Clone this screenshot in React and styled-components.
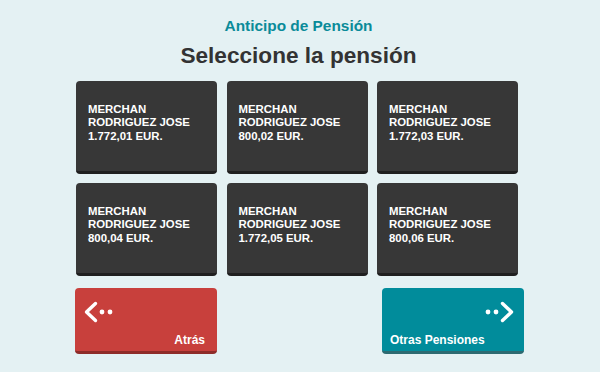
import React from 'react';
import styled, { createGlobalStyle } from 'styled-components';

const GlobalStyle = createGlobalStyle`
  html, body {
    margin: 0;
    padding: 0;
    background: #e4f1f3;
  }
  body {
    font-family: "Liberation Sans", Arial, sans-serif;
  }
`;

const Screen = styled.div`
  width: 600px;
  height: 372px;
  box-sizing: border-box;
  padding-top: 17px;
  display: flex;
  flex-direction: column;
  align-items: center;
  overflow: hidden;
`;

const Subtitle = styled.div`
  margin-left: -3px;
  color: #0a8b99;
  font-size: 15.4px;
  line-height: 18px;
  font-weight: bold;
`;

const Title = styled.h1`
  margin: 8px 0 0 -3px;
  color: #333333;
  font-size: 22.6px;
  line-height: 26px;
  font-weight: bold;
`;

const Grid = styled.div`
  margin-top: 12px;
  margin-left: -6px;
  display: grid;
  grid-template-columns: repeat(3, 141px);
  grid-auto-rows: 93px;
  column-gap: 9.5px;
  row-gap: 9px;
`;

const Card = styled.button`
  box-sizing: border-box;
  height: 93px;
  padding: 22px 12px 0;
  border: 0;
  border-bottom: 3px solid #1f1f1f;
  border-radius: 4px;
  background: #373737;
  color: #ffffff;
  font-family: inherit;
  font-size: 11.4px;
  line-height: 13.3px;
  font-weight: bold;
  text-align: left;
  display: flex;
  flex-direction: column;
  align-items: flex-start;
  cursor: pointer;
`;

const Footer = styled.div`
  margin-top: 12px;
  width: 449px;
  margin-left: -1px;
  display: flex;
  justify-content: space-between;
`;

const ActionButton = styled.button`
  box-sizing: border-box;
  width: 142px;
  height: 66px;
  padding: 13px 9px 4px 8px;
  border: 0;
  border-bottom: 3px solid ${p => p.$shade};
  border-radius: 4px;
  background: ${p => p.$color};
  color: #ffffff;
  font-family: inherit;
  font-size: 12px;
  line-height: 14px;
  font-weight: bold;
  display: flex;
  flex-direction: column;
  justify-content: space-between;
  align-items: ${p => (p.$side === 'left' ? 'flex-start' : 'flex-end')};
  cursor: pointer;
`;

const Label = styled.span`
  align-self: ${p => (p.$side === 'left' ? 'flex-end' : 'flex-start')};
  padding: ${p => (p.$side === 'left' ? '0 3px 0 0' : '0')};
`;

const ArrowIcon = ({ dir }) => (
  <svg width="30" height="22" viewBox="0 0 30 22" fill="none">
    {dir === 'left' ? (
      <>
        <polyline points="12.5,2.5 3.5,11 12.5,19.5" stroke="#fff" strokeWidth="3.4" strokeLinecap="round" strokeLinejoin="round" />
        <circle cx="19" cy="11" r="2.4" fill="#fff" />
        <circle cx="27" cy="11" r="2.4" fill="#fff" />
      </>
    ) : (
      <>
        <circle cx="3" cy="11" r="2.4" fill="#fff" />
        <circle cx="11" cy="11" r="2.4" fill="#fff" />
        <polyline points="17.5,2.5 26.5,11 17.5,19.5" stroke="#fff" strokeWidth="3.4" strokeLinecap="round" strokeLinejoin="round" />
      </>
    )}
  </svg>
);

const pensions = [
  '1.772,01', '800,02', '1.772,03',
  '800,04', '1.772,05', '800,06',
];

export default function App() {
  return (
    <>
      <GlobalStyle />
      <Screen>
        <Subtitle>Anticipo de Pensión</Subtitle>
        <Title>Seleccione la pensión</Title>
        <Grid>
          {pensions.map(amount => (
            <Card key={amount}>
              <span>MERCHAN</span>
              <span>RODRIGUEZ JOSE</span>
              <span>{amount} EUR.</span>
            </Card>
          ))}
        </Grid>
        <Footer>
          <ActionButton $color="#c8403c" $shade="#8e2c29" $side="left">
            <ArrowIcon dir="left" />
            <Label $side="left">Atrás</Label>
          </ActionButton>
          <ActionButton $color="#018c9b" $shade="#2d6a71" $side="right">
            <ArrowIcon dir="right" />
            <Label $side="right">Otras Pensiones</Label>
          </ActionButton>
        </Footer>
      </Screen>
    </>
  );
}
